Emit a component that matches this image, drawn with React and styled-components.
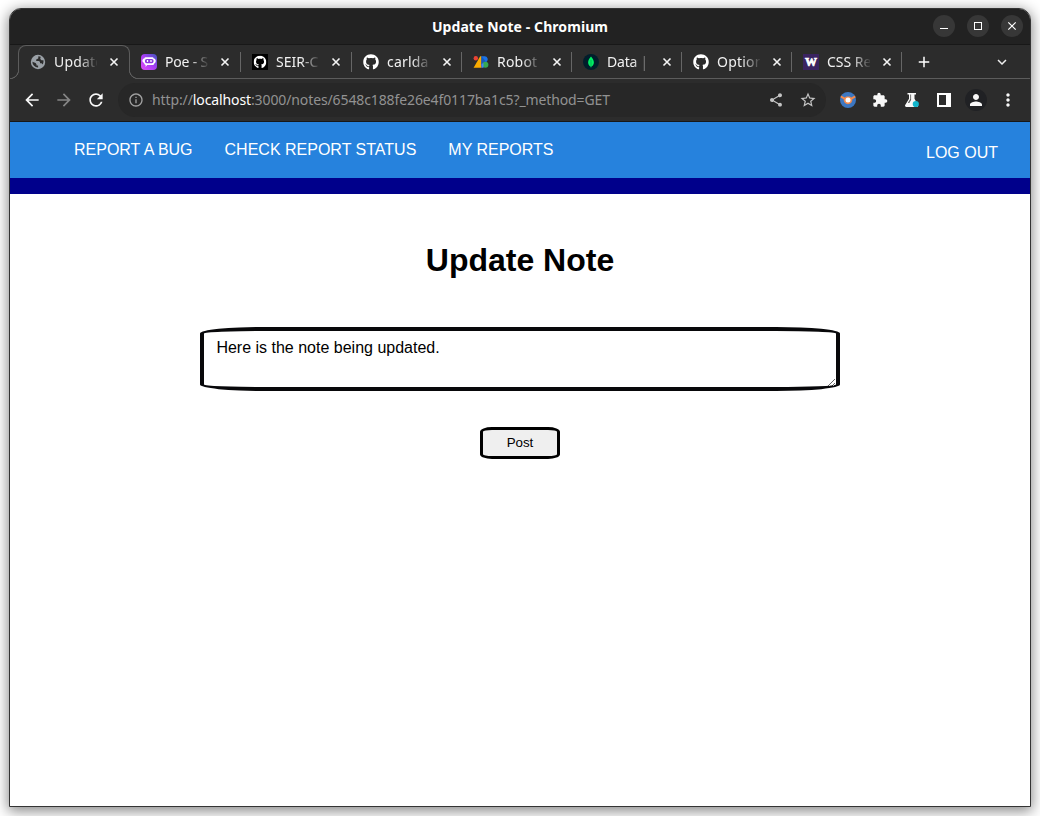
import React from 'react';
import styled, { createGlobalStyle, css } from 'styled-components';
import {
  MdArrowBack, MdArrowForward, MdRefresh, MdInfoOutline, MdShare, MdStarOutline,
  MdExtension, MdMoreVert, MdPerson, MdAdd, MdExpandMore,
} from 'react-icons/md';
import { FaGithub } from 'react-icons/fa';

const GlobalStyle = createGlobalStyle`
  * { box-sizing: border-box; }
  body { margin: 0; background: #fff; overflow: hidden; }
  svg { display: block; flex: none; }
`;

const Desktop = styled.div`
  height: 816px;
  padding: 8px 9px 9px;
  overflow: hidden;
`;

const Window = styled.div`
  width: 1022px;
  height: 799px;
  border: 1px solid #343434;
  border-radius: 12px 12px 0 0;
  background: #fff;
  overflow: hidden;
  box-shadow: 0 3px 14px 1px rgba(0, 0, 0, 0.48);
`;

const TitleBar = styled.header`
  height: 36px;
  display: grid;
  grid-template-columns: 1fr auto 1fr;
  align-items: center;
  background: #222;
  border-bottom: 1px solid #181818;
`;

const WindowTitle = styled.div`
  grid-column: 2;
  color: #fff;
  font: 700 14px/20px "Noto Sans", sans-serif;
  letter-spacing: 0.08px;
`;

const WindowControls = styled.div`
  justify-self: end;
  display: flex;
  gap: 12px;
  padding: 0 7px 1px 0;
`;

const ControlButton = styled.span`
  width: 22px;
  height: 22px;
  border-radius: 50%;
  background: #373737;
`;

const TabStrip = styled.nav`
  height: 34px;
  display: flex;
  padding-left: 8px;
  background: #2c2c2c;
  border-bottom: 1px solid #5c5c5c;
`;

const activeTab = css`
  position: relative;
  height: 34px;
  padding: 0 0 2px 11px;
  border: 1px solid #5c5c5c;
  border-bottom: 0;
  border-radius: 8px 8px 0 0;
  background: #2c2c2c;
  &::before, &::after {
    content: '';
    position: absolute;
    bottom: 0;
    width: 9px;
    height: 9px;
  }
  &::before {
    left: -9px;
    background: radial-gradient(circle at 0 0, #2c2c2c 7.7px, #5c5c5c 8.2px, #5c5c5c 8.8px, #2c2c2c 9.3px);
  }
  &::after {
    right: -9px;
    background: radial-gradient(circle at 100% 0, #2c2c2c 7.7px, #5c5c5c 8.2px, #5c5c5c 8.8px, #2c2c2c 9.3px);
  }
`;

const TabItem = styled.div`
  width: ${p => p.$width}px;
  height: 33px;
  flex: none;
  display: flex;
  align-items: center;
  padding-left: 11px;
  ${p => p.$active && activeTab}
`;

const TabIcon = styled.span`
  width: 16px;
  height: 16px;
  flex: none;
  color: #fff;
`;

const TabLabel = styled.span`
  width: 43px;
  margin-left: 8px;
  overflow: hidden;
  white-space: nowrap;
  color: #f1f1f1;
  font: 14px/20px "Noto Sans", sans-serif;
  letter-spacing: ${p => p.$spacing || 0}px;
  mask-image: linear-gradient(90deg, #000 58%, rgba(0, 0, 0, 0.08));
`;

const TabClose = styled.span`
  margin-left: 10px;
`;

const Divider = styled.span`
  width: 1px;
  height: 20px;
  margin-left: auto;
  background: #666;
`;

const NewTab = styled.span`
  margin: 8px 0 0 13px;
  color: #fff;
`;

const TabMenu = styled.span`
  margin: 8px 19px 0 auto;
  color: #eee;
`;

const Toolbar = styled.div`
  height: 43px;
  display: flex;
  align-items: center;
  padding: 0 6px;
  background: #2c2c2c;
  border-bottom: 1px solid #171717;
`;

const ToolButton = styled.span`
  width: 32px;
  height: 32px;
  display: grid;
  place-items: center;
  color: ${p => p.$dim ? '#858585' : '#f8f8f8'};
`;

const AddressBar = styled.div`
  width: 708px;
  height: 34px;
  margin: 0 6px;
  padding: 0 2px;
  display: flex;
  align-items: center;
  border-radius: 17px;
  background: #272727;
`;

const AddressIcon = styled.span`
  width: 32px;
  display: grid;
  place-items: center;
  color: ${p => p.$light ? '#c4c4c4' : '#a2a2a2'};
`;

const Url = styled.span`
  flex: 1;
  color: #929292;
  font: 14px/20px "Noto Sans", sans-serif;
  letter-spacing: -0.11px;
  white-space: nowrap;
`;

const Host = styled.span`
  color: #fff;
`;

const Avatar = styled.span`
  width: 22px;
  height: 22px;
  display: grid;
  place-items: center;
  border-radius: 50%;
  background: #202124;
`;

const NavBar = styled.nav`
  height: 72px;
  display: flex;
  justify-content: space-between;
  padding: 0 32px 0 64px;
  background: #2682dd;
  border-bottom: 16px solid #00008b;
  color: #fff;
  font: 16px/18px "Liberation Sans", sans-serif;
`;

const NavLinks = styled.div`
  display: flex;
  gap: 32px;
  padding-top: 19px;
`;

const LogOut = styled.div`
  padding-top: 22px;
`;

const Page = styled.main`
  display: flex;
  flex-direction: column;
  align-items: center;
  font-family: "Liberation Sans", sans-serif;
`;

const Heading = styled.h1`
  margin: 48px 0 0;
  color: #000;
  font-size: 32px;
  line-height: 37px;
`;

const NoteField = styled.textarea`
  width: 640px;
  height: 64px;
  margin: 48px 0 0;
  padding: 8px 12.4px;
  border: 4px solid #08080a;
  border-radius: 10%;
  outline: 0;
  background: #fff;
  color: #000;
  font: 16px/18px "Liberation Sans", sans-serif;
`;

const PostButton = styled.button`
  width: 80px;
  height: 32px;
  margin-top: 36px;
  padding: 0 0 2px;
  border: 3px solid #000;
  border-radius: 15%;
  background: #efefef;
  color: #000;
  font: 13.333px "Liberation Sans", sans-serif;
`;

const GlobeIcon = () => (
  <svg width="16" height="16" viewBox="0 0 16 16">
    <circle cx="8" cy="8" r="7.2" fill="#9aa0a6" />
    <path d="M8.4 2.3l-.2 2.3-2 .8v1.5H9l1 1.2v1.2h1.6l1.2 1.1a5.6 5.6 0 0 0 .6-4.2h-1.9l-1.2-1.1V3.8l.7-.8a5.6 5.6 0 0 0-2.6-.7z" fill="#2c2c2c" />
    <path d="M2.4 7.7l3.2 1.4.9 1.1v1.2h1.6v2.1a5.6 5.6 0 0 1-5.7-5.8z" fill="#2c2c2c" />
  </svg>
);

const TabCloseIcon = () => (
  <svg width="14" height="14" viewBox="0 0 14 14">
    <path d="M3.5 3.5l7 7M10.5 3.5l-7 7" stroke="#f4f4f4" strokeWidth="1.6" />
  </svg>
);

const PoeIcon = () => (
  <svg width="16" height="16" viewBox="0 0 16 16">
    <defs>
      <linearGradient id="poe" x1="0" y1="1" x2="1" y2="0">
        <stop offset="0" stopColor="#e04df5" />
        <stop offset=".5" stopColor="#a93df5" />
        <stop offset="1" stopColor="#3f55bd" />
      </linearGradient>
    </defs>
    <rect width="16" height="16" rx="4" fill="url(#poe)" />
    <path d="M4.5 3.3h7a1 1 0 0 1 1 1 2.7 2.7 0 0 1 .8 5.1 2 2 0 0 1-1.8 1.6H6.2l-1.6 1.9V11a2 2 0 0 1-1.5-2 2.4 2.4 0 0 1 .4-4.7 1 1 0 0 1 1-1z" fill="#fff" />
    <rect x="4" y="5" width="8.5" height="4.2" rx="1.6" fill="#8d38df" />
    <path d="M6.5 6v2M10 6v2" stroke="#fff" strokeWidth="1.3" />
  </svg>
);

const GithubSquareIcon = () => (
  <svg width="16" height="16" viewBox="0 0 16 16">
    <rect width="16" height="16" fill="#000" />
    <FaGithub x="1.5" y="1.5" width="13" height="13" size={13} color="#fff" />
  </svg>
);

const RobotIcon = () => (
  <svg width="16" height="16" viewBox="0 0 16 16">
    <path d="M7.2 2.3h1.3v11.4H.6z" fill="#f9ab00" />
    <circle cx="2.8" cy="4.3" r="2.2" fill="#ea4335" />
    <path d="M8.5 2.3h3.3a3 3 0 0 1 2 5.2l-5.3 5z" fill="#1a73e8" />
    <path d="M8.5 2.3l4.2 5-4.2 5z" fill="#185abc" />
    <circle cx="12.4" cy="10.8" r="3" fill="#34a853" />
    <path d="M8.5 13.7V10l2-1v4.7z" fill="#4285f4" />
  </svg>
);

const MongoIcon = () => (
  <svg width="16" height="16" viewBox="0 0 16 16">
    <circle cx="8" cy="8" r="8" fill="#001e2b" />
    <path d="M8 2.4C6.2 4.6 5.1 6.2 5.1 8.4c0 1.9 1.1 3.3 2.5 4.2L8 14l.4-1.4c1.4-.9 2.5-2.3 2.5-4.2C10.9 6.2 9.8 4.6 8 2.4z" fill="#00ed64" />
    <path d="M8 6v6" stroke="#00a94f" strokeWidth=".8" />
  </svg>
);

const PurpleIcon = () => (
  <svg width="16" height="16" viewBox="0 0 16 16">
    <rect width="16" height="16" fill="#3a2361" />
    <text x="8" y="12.4" textAnchor="middle" fill="#fff" stroke="#fff" strokeWidth=".7" fontFamily="Liberation Serif, serif" fontSize="12" fontWeight="700">W</text>
  </svg>
);

const PostmanIcon = () => (
  <svg width="16" height="16" viewBox="0 0 16 16">
    <circle cx="8" cy="8" r="8" fill="#3c77c2" />
    <path d="M1 3.6l3.8 2L6.3 4.4h3.4l1.5 1.2 3.8-2 .5 1.8-3.2 1.9A4.4 4.4 0 0 1 8 12.2a4.4 4.4 0 0 1-4.3-4.9L.5 5.4z" fill="#f28a4d" />
    <circle cx="8" cy="8" r="2.5" fill="#fff" />
  </svg>
);

const FlaskIcon = () => (
  <svg width="16" height="16" viewBox="0 0 16 16">
    <path d="M3.5 1H12v1.6h-1.5v4.1L14 13a1.3 1.3 0 0 1-1.2 2H2.4a1.3 1.3 0 0 1-1.2-2L5 6.7V2.6H3.5z" fill="#f8f8f8" />
    <path d="M6.2 2.6v4.5L3.8 11h1.5l1.8-3V2.6z" fill="#2c2c2c" opacity=".75" />
    <circle cx="11.8" cy="12" r="3.1" fill="#12b5cb" />
  </svg>
);

const PanelIcon = () => (
  <svg width="14" height="14" viewBox="0 0 14 14">
    <path d="M0 0h14v14H0zM2 2v10h7V2z" fill="#fff" fillRule="evenodd" />
  </svg>
);

const MinimizeIcon = () => (
  <svg width="22" height="22" viewBox="0 0 22 22"><path d="M7 13.5h8" stroke="#fff" /></svg>
);
const MaximizeIcon = () => (
  <svg width="22" height="22" viewBox="0 0 22 22"><rect x="7.5" y="7.5" width="7" height="7" fill="none" stroke="#fff" /></svg>
);
const CloseIcon = () => (
  <svg width="22" height="22" viewBox="0 0 22 22"><path d="M7.3 7.3l7.4 7.4M14.7 7.3l-7.4 7.4" stroke="#fff" strokeWidth="1.2" /></svg>
);

const tabs = [
  { label: 'Update', icon: <GlobeIcon />, width: 112, active: true, spacing: 0.2 },
  { label: 'Poe - S', icon: <PoeIcon />, width: 111, spacing: -0.2 },
  { label: 'SEIR-C', icon: <GithubSquareIcon />, width: 111 },
  { label: 'carlda', icon: <FaGithub size={16} />, width: 110, spacing: 0.2 },
  { label: 'Robot', icon: <RobotIcon />, width: 110, spacing: 0.2 },
  { label: 'Data |', icon: <MongoIcon />, width: 110, spacing: -0.2 },
  { label: 'Option', icon: <FaGithub size={16} />, width: 110, spacing: 0.2 },
  { label: 'CSS Re', icon: <PurpleIcon />, width: 110 },
];

export default function App() {
  return (
    <Desktop>
      <GlobalStyle />
      <Window>
        <TitleBar>
          <WindowTitle>Update Note - Chromium</WindowTitle>
          <WindowControls>
            <ControlButton><MinimizeIcon /></ControlButton>
            <ControlButton><MaximizeIcon /></ControlButton>
            <ControlButton><CloseIcon /></ControlButton>
          </WindowControls>
        </TitleBar>
        <TabStrip>
          {tabs.map(tab => (
            <TabItem key={tab.label} $width={tab.width} $active={tab.active}>
              <TabIcon>{tab.icon}</TabIcon>
              <TabLabel $spacing={tab.spacing}>{tab.label}</TabLabel>
              <TabClose><TabCloseIcon /></TabClose>
              {!tab.active && <Divider />}
            </TabItem>
          ))}
          <NewTab><MdAdd size={18} /></NewTab>
          <TabMenu><MdExpandMore size={18} /></TabMenu>
        </TabStrip>
        <Toolbar>
          <ToolButton><MdArrowBack size={20} /></ToolButton>
          <ToolButton $dim><MdArrowForward size={20} /></ToolButton>
          <ToolButton><MdRefresh size={20} /></ToolButton>
          <AddressBar>
            <AddressIcon><MdInfoOutline size={16} /></AddressIcon>
            <Url>http://<Host>localhost</Host>:3000/notes/6548c188fe26e4f0117ba1c5?_method=GET</Url>
            <AddressIcon $light><MdShare size={16} /></AddressIcon>
            <AddressIcon $light><MdStarOutline size={18} /></AddressIcon>
          </AddressBar>
          <ToolButton><PostmanIcon /></ToolButton>
          <ToolButton><MdExtension size={16} /></ToolButton>
          <ToolButton><FlaskIcon /></ToolButton>
          <ToolButton><PanelIcon /></ToolButton>
          <ToolButton><Avatar><MdPerson size={18} /></Avatar></ToolButton>
          <ToolButton><MdMoreVert size={20} /></ToolButton>
        </Toolbar>
        <NavBar>
          <NavLinks>
            <span>REPORT A BUG</span>
            <span>CHECK REPORT STATUS</span>
            <span>MY REPORTS</span>
          </NavLinks>
          <LogOut>LOG OUT</LogOut>
        </NavBar>
        <Page>
          <Heading>Update Note</Heading>
          <NoteField defaultValue="Here is the note being updated." spellCheck={false} />
          <PostButton>Post</PostButton>
        </Page>
      </Window>
    </Desktop>
  );
}
